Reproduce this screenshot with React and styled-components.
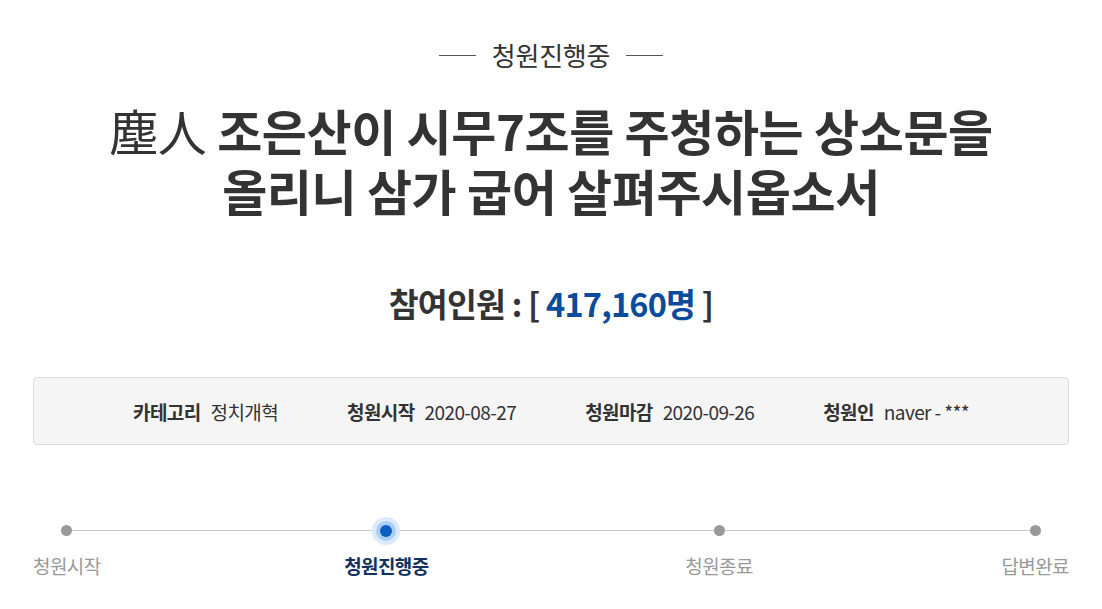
import React from "react";
import styled, { createGlobalStyle } from "styled-components";

const Global = createGlobalStyle`
  html, body { margin: 0; padding: 0; background: #fff; }
  body { font-family: "Noto Sans CJK KR", "Noto Sans", sans-serif; color: #333; }
  * { box-sizing: border-box; }
`;

const Page = styled.div`
  width: 1102px;
  padding: 0 33px;
`;

const Status = styled.div`
  display: flex;
  justify-content: center;
  align-items: center;
  gap: 16px;
  padding-top: 36px;
  height: 74px;
  font-size: 26px;
  line-height: 36px;
  letter-spacing: -0.2px;
  color: #333;
  &::before, &::after {
    content: "";
    width: 37px;
    height: 1px;
    background: #555;
  }
`;

const Title = styled.h1`
  margin: 26px 0 0;
  text-align: center;
  font-size: 49px;
  line-height: 60px;
  font-weight: 700;
  color: #333;
  letter-spacing: -0.4px;
`;

const TitleLine = styled.span`
  display: block;
`;

const Hanja = styled.span`
  font-weight: 400;
`;

const Count = styled.div`
  margin-top: 63px;
  text-align: center;
  font-size: 32.5px;
  line-height: 40px;
  font-weight: 700;
  color: #333;
  letter-spacing: -0.8px;
`;

const Num = styled.span`
  color: #0a4b9c;
`;

const Info = styled.div`
  margin-top: 54px;
  height: 68px;
  background: #f5f5f5;
  border: 1px solid #dcdcdc;
  border-radius: 4px;
  display: flex;
  justify-content: center;
  align-items: center;
  gap: 69px;
  font-size: 19px;
  letter-spacing: -0.6px;
`;

const InfoItem = styled.div`
  display: flex;
  align-items: center;
  gap: 10px;
`;

const Label = styled.span`
  font-weight: 700;
  color: #333;
`;

const Value = styled.span`
  color: #333;
`;

const Steps = styled.div`
  position: relative;
  margin-top: 72px;
  display: flex;
  justify-content: space-between;
`;

const Track = styled.div`
  position: absolute;
  top: 13px;
  left: 32px;
  right: 34px;
  height: 1px;
  background: #c8c8c8;
`;

const Step = styled.div`
  position: relative;
  left: ${p => p.$shift || 0}px;
  display: flex;
  flex-direction: column;
  align-items: center;
  gap: 9px;
`;

const DotWrap = styled.div`
  width: 27px;
  height: 27px;
  display: flex;
  align-items: center;
  justify-content: center;
`;

const Dot = styled.div`
  width: ${p => (p.$active ? 12 : 11)}px;
  height: ${p => (p.$active ? 12 : 11)}px;
  border-radius: 50%;
  background: ${p => (p.$active ? "#0b5fc0" : "#999")};
  box-shadow: ${p =>
    p.$active ? "0 0 0 4px #a9cff5, 0 0 0 8px #dbeafc" : "none"};
`;

const StepLabel = styled.div`
  font-size: 19px;
  line-height: 26px;
  letter-spacing: -0.6px;
  color: ${p => (p.$active ? "#14305f" : "#999")};
  font-weight: ${p => (p.$active ? 700 : 400)};
`;

const steps = [
  { label: "청원시작" },
  { label: "청원진행중", active: true, shift: -6 },
  { label: "청원종료", shift: 1 },
  { label: "답변완료" },
];

export default function App() {
  return (
    <>
      <Global />
      <Page>
        <Status>청원진행중</Status>
        <Title>
          <TitleLine>
            <Hanja>塵人</Hanja> 조은산이 시무7조를 주청하는 상소문을
          </TitleLine>
          <TitleLine>올리니 삼가 굽어 살펴주시옵소서</TitleLine>
        </Title>
        <Count>
          참여인원 : [ <Num>417,160명</Num> ]
        </Count>
        <Info>
          <InfoItem>
            <Label>카테고리</Label>
            <Value>정치개혁</Value>
          </InfoItem>
          <InfoItem>
            <Label>청원시작</Label>
            <Value>2020-08-27</Value>
          </InfoItem>
          <InfoItem>
            <Label>청원마감</Label>
            <Value>2020-09-26</Value>
          </InfoItem>
          <InfoItem>
            <Label>청원인</Label>
            <Value>naver - ***</Value>
          </InfoItem>
        </Info>
        <Steps>
          <Track />
          {steps.map(s => (
            <Step key={s.label} $shift={s.shift}>
              <DotWrap>
                <Dot $active={s.active} />
              </DotWrap>
              <StepLabel $active={s.active}>{s.label}</StepLabel>
            </Step>
          ))}
        </Steps>
      </Page>
    </>
  );
}
